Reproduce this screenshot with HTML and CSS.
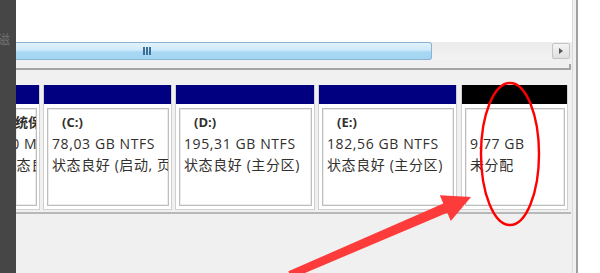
FILE: index.html
```html
<!DOCTYPE html>
<html lang="zh-CN">
  <head>
    <meta charset="UTF-8">
    <title>磁盘管理</title>
    <link rel="stylesheet" href="styles.css">
  </head>
  <body>
    <div class="side"><span class="side-label">磁</span></div>

    <div class="win">
      <div class="pane"></div>

      <!-- 横スクロールバー -->
      <div class="hscroll">
        <div class="thumb"><span class="grip"></span></div>
        <div class="track"></div>
        <div class="arrow-btn"><span class="tri"></span></div>
      </div>

      <div class="divider"></div>

      <!-- パーティション一覧 -->
      <div class="disks">
        <div class="part part-clip">
          <div class="part-head"></div>
          <div class="part-body">
            <div class="part-box">
              <div class="shift">
                <div class="vol">系统保留</div>
                <div class="line size">100 MB</div>
                <div class="line">状态良好</div>
              </div>
            </div>
          </div>
        </div>

        <div class="part part-c">
          <div class="part-head"></div>
          <div class="part-body">
            <div class="part-box">
              <div class="vol">(C:)</div>
              <div class="line">78,03 GB NTFS</div>
              <div class="line">状态良好 (启动, 页面文件)</div>
            </div>
          </div>
        </div>

        <div class="part part-d">
          <div class="part-head"></div>
          <div class="part-body">
            <div class="part-box">
              <div class="vol">(D:)</div>
              <div class="line">195,31 GB NTFS</div>
              <div class="line">状态良好 (主分区)</div>
            </div>
          </div>
        </div>

        <div class="part part-e">
          <div class="part-head"></div>
          <div class="part-body">
            <div class="part-box">
              <div class="vol">(E:)</div>
              <div class="line">182,56 GB NTFS</div>
              <div class="line">状态良好 (主分区)</div>
            </div>
          </div>
        </div>

        <div class="part part-free">
          <div class="part-head"></div>
          <div class="part-body">
            <div class="part-box">
              <div class="vol">&nbsp;</div>
              <div class="line">9.77 GB</div>
              <div class="line">未分配</div>
            </div>
          </div>
        </div>
      </div>

      <div class="baseline"></div>
    </div>

    <div class="edge"></div>
    <div class="outer"></div>

    <!-- 赤い注釈（丸と矢印） -->
    <svg class="marks" width="600" height="273" viewBox="0 0 600 273">
      <ellipse cx="510" cy="154" rx="29" ry="71" fill="none" stroke="#ff0000" stroke-width="2.4"/>
      <polygon fill="#fe3b3b" points="471,197 439.8,195.2 443.3,203.5 288.4,271.3 291.6,278.7 447.3,212.7 450.8,221"/>
    </svg>
  </body>
</html>
```

FILE: styles.css
```css
html, body {
  margin: 0;
  height: 100%;
}
body {
  width: 600px;
  height: 273px;
  overflow: hidden;
  display: flex;
  background: #fff;
  font-family: "Open Sans", "Noto Sans CJK SC", sans-serif;
  font-size: 14px;
  color: #322f2d;
  position: relative;
}
.side {
  width: 16px;
  flex: none;
  background: #464646;
  overflow: hidden;
}
.side-label {
  display: block;
  margin: 32px 0 0 -3px;
  font-size: 13px;
  line-height: 14px;
  color: #6e6e6e;
}
.win {
  width: 556px;
  flex: none;
  display: flex;
  flex-direction: column;
  background: #f0f0f0;
}
.pane {
  height: 42px;
  background: #fff;
}

/* scrollbar */
.hscroll {
  height: 18px;
  display: flex;
  background: #eeeeee;
}
.thumb {
  width: 416px;
  box-sizing: border-box;
  border: 1px solid #8ab2d2;
  border-left: 0;
  border-radius: 0 3px 3px 0;
  background: linear-gradient(#e2f2fc, #cdeafa 45%, #a9d9f4 55%, #a3d4f1);
  display: flex;
  align-items: center;
}
.grip {
  width: 9px;
  height: 8px;
  margin-left: 127px;
  background: repeating-linear-gradient(90deg, #3f6f98 0 2px, transparent 2px 3px);
}
.track {
  flex: 1;
  background: linear-gradient(#ebebeb, #f3f3f3);
}
.arrow-btn {
  width: 18px;
  margin: 1px 2px 1px 0;
  box-sizing: border-box;
  border: 1px solid #c4c4c4;
  border-radius: 2px;
  background: linear-gradient(#f4f4f4, #e0e0e0);
  display: flex;
  align-items: center;
  justify-content: center;
}
.tri {
  width: 0;
  height: 0;
  border-top: 3px solid transparent;
  border-bottom: 3px solid transparent;
  border-left: 4px solid #555;
}
.divider {
  height: 2px;
  margin-top: 8px;
  margin-right: 1px;
  background: #a4a4a4;
  position: relative;
}
.divider::after {
  content: "";
  position: absolute;
  right: 0;
  bottom: 0;
  width: 2px;
  height: 6px;
  background: #a4a4a4;
}

/* partitions */
.disks {
  height: 125px;
  margin-top: 15px;
  padding-right: 4px;
  display: flex;
  gap: 3px;
}
.part {
  box-sizing: border-box;
  display: flex;
  flex-direction: column;
  background: #fff;
  border: 1px solid #d0d0d0;
  border-top: 0;
}
.part-clip { width: 24px; overflow: hidden; border-left: 0; }
.part-c { width: 129px; }
.part-d { width: 140px; }
.part-e { width: 139px; }
.part-free { width: 107px; margin-left: 1px; }
.part-head {
  height: 19px;
  flex: none;
  background: #000080;
}
.part-free .part-head { background: #000; }
.part-body {
  flex: 1;
  padding: 4px 2px 3px 3px;
  display: flex;
  overflow: hidden;
}
.part-clip .part-body { padding-left: 0; }
.part-box {
  flex: 1;
  min-width: 0;
  box-sizing: border-box;
  border: 1px solid #bdbdbd;
  box-shadow: inset 0 0 0 1px #ececec;
  padding: 3px 0 0 4px;
  overflow: hidden;
  white-space: nowrap;
  line-height: 21px;
}
.part-clip .part-box { border-left: 0; padding-left: 0; }
.shift { margin-left: -14px; }
.line {
  letter-spacing: 0.6px;
  overflow: hidden;
}
.shift .size { margin-left: -8px; }
.vol {
  padding-left: 10px;
  font-size: 13px;
  font-weight: 700;
}
.part-clip .vol { padding-left: 0; }
.baseline {
  height: 2px;
  margin-top: 2px;
  margin-right: 1px;
  background: #b8b8b8;
}

.edge {
  width: 6px;
  flex: none;
  box-sizing: border-box;
  border-left: 1px solid #dadada;
  border-right: 2px solid #a0a0a0;
  background: #f0f0f0;
}
.outer {
  flex: 1;
  background: #fff;
}
.marks {
  position: absolute;
  left: 0;
  top: 0;
}
```
